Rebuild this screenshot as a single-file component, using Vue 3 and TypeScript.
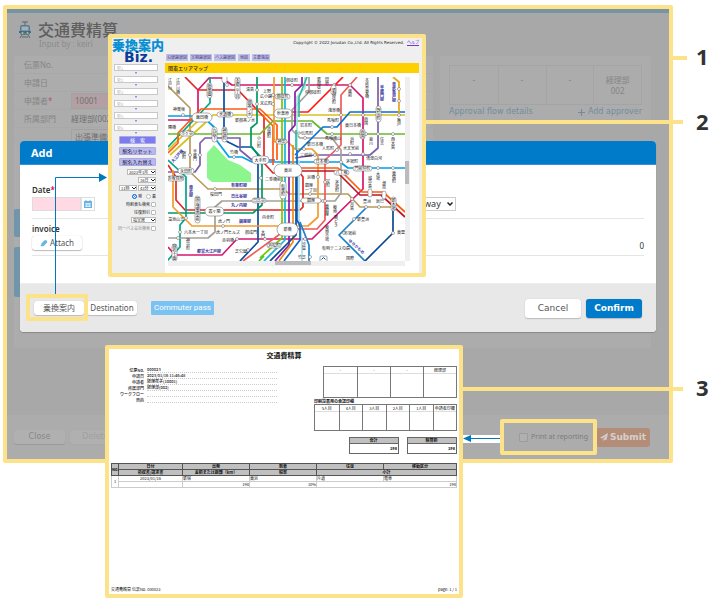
<script setup lang="ts">
import { ref } from 'vue'

interface Line { c: string; d: string; w?: number }
interface Station { x: number; y: number; w: number; h: number; t?: string; v?: boolean }
interface Label { x: number; y: number; t: string; v?: boolean; b?: boolean }

const lines: Line[] = [
  { c: '#b89a5e', d: 'M168 86 190 108V172L208 189H282L290 194H348L360 207H393' },
  { c: '#d8c020', d: 'M168 150 199 120M170 155 205 123 213 115H405' },
  { c: '#d6186e', d: 'M168 120H198V90L209 78H222L232 85H350L363 98V189L312 239H237L222 255H175L168 247' },
  { c: '#e02828', d: 'M185 77 198 90H238L264 117V163L273 173H300L303 177V207L300 210H185L176 200V177L168 165' },
  { c: '#ff1818', d: 'M343 77 308 112H290' },
  { c: '#00a58c', d: 'M210 77V103L168 147M168 160 186 177V218L180 225V247L167 261' },
  { c: '#009fe8', d: 'M168 116H202L214 127V137L229 157H242L252 162H340L348 168H405' },
  { c: '#ff5a10', d: 'M168 153 178 143V133L201 109H260L277 125V160' },
  { c: '#ff5a10', d: 'M262 115 273 126V165' },
  { c: '#6ab82e', d: 'M168 134H260L273 121H312L327 134H405' },
  { c: '#0a4fa0', d: 'M224 77V140L238 147H252L258 155V242L240 261' },
  { c: '#7a5fa8', d: 'M168 172H195L200 165V143L205 138H240V150L252 160H275M295 158 315 155H370L378 148V77' },
  { c: '#009a60', d: 'M257 77V123L251 128V147L262 158V205L253 213H168' },
  { c: '#f39c2c', d: 'M173 170V207L192 226H308L318 217V155L312 149H295L288 142H275L274 137V77' },
  { c: '#a5a098', d: 'M168 238H208L215 232V207L222 201H335L341 193V150L332 138H300L292 130V110L309 92V77' },
  { c: '#ef5b5b', d: 'M357 77 341 95V145L325 160V220L317 229H287L243 261' },
  { c: '#0b70d0', d: 'M405 112H350L337 127H323L295 155' },
  { c: '#b4def0', d: 'M299 160V220L302 240V261' },
  { c: '#a0e5dc', d: 'M305 77V88L297 97V155' },
  { c: '#33b8a5', d: 'M307 77 299 97V117M296 130V150' },
  { c: '#8a1aaa', d: 'M302 77V85L295 92V125L289 132V245L275 261' },
  { c: '#78c800', d: 'M282 77V238L260 258' },
  { c: '#18b5dc', d: 'M285 77V240L264 261' },
  { c: '#ef8a18', d: 'M293 145V242L279 261' },
  { c: '#1068be', d: 'M297 150V220L300 226V240L284 261' },
  { c: '#0a4e96', d: 'M296 170V235L270 261' },
  { c: '#1880cd', d: 'M300 222 309 245V261' },
  { c: '#ff5a10', d: 'M300 168H338L362 192H383L405 212' },
  { c: '#bc1827', d: 'M300 171H336L360 195H381L405 217' },
  { c: '#1880cd', d: 'M367 207 339 235 365 261' },
  { c: '#0b4896', d: 'M365 261 393 233V207' },
  { c: '#eba50e', d: 'M393 77 399 82V115' },
  { c: '#45c820', d: 'M259 261 264 256' }
]
const stations: Station[] = [
  { x: 192, y: 113, w: 20, h: 9, t: '飯田橋' }, { x: 274, y: 109, w: 18, h: 9, t: '秋葉原' },
  { x: 274, y: 164, w: 28, h: 13, t: '東京' }, { x: 277, y: 223, w: 21, h: 13, t: '新橋' },
  { x: 252, y: 156, w: 17, h: 8, t: '大手町' }, { x: 205, y: 207, w: 19, h: 9, t: '霞ヶ関' },
  { x: 178, y: 168, w: 16, h: 6, t: '永田町' }, { x: 167, y: 176, w: 17, h: 5, t: '赤坂見附' },
  { x: 217, y: 112, w: 16, h: 5, t: '水道橋' }, { x: 180, y: 131, w: 14, h: 5, t: '市ヶ谷' },
  { x: 275, y: 94, w: 15, h: 5, t: '御徒町' }, { x: 276, y: 139, w: 11, h: 5, t: '神田' },
  { x: 314, y: 159, w: 15, h: 5, t: '日本橋' }, { x: 353, y: 166, w: 19, h: 5, t: '門前仲町' },
  { x: 301, y: 198, w: 20, h: 5, t: '銀座' }, { x: 334, y: 170, w: 15, h: 5, t: '八丁堀' },
  { x: 267, y: 243, w: 14, h: 5, t: '浜松町' }, { x: 252, y: 198, w: 14, h: 5, t: '日比谷' },
  { x: 207, y: 83, w: 5, h: 15, t: '後楽園', v: true }, { x: 222, y: 70, w: 5, h: 13, v: true },
  { x: 235, y: 77, w: 5, h: 22, t: '本郷三丁目', v: true }, { x: 247, y: 99, w: 5, h: 19, t: '御茶ノ水', v: true },
  { x: 212, y: 127, w: 5, h: 15, t: '九段下', v: true }, { x: 222, y: 127, w: 5, h: 15, t: '神保町', v: true },
  { x: 195, y: 196, w: 5, h: 27, t: '国会議事堂前', v: true }, { x: 280, y: 181, w: 6, h: 18, t: '有楽町', v: true },
  { x: 172, y: 244, w: 5, h: 17, t: '麻布十番', v: true }, { x: 331, y: 85, w: 5, h: 10, v: true },
  { x: 376, y: 106, w: 5, h: 16, t: '錦糸町', v: true }, { x: 360, y: 129, w: 5, h: 10, t: '両国', v: true },
  { x: 368, y: 189, w: 4, h: 8, v: true }, { x: 382, y: 191, w: 4, h: 8, v: true },
  { x: 391, y: 197, w: 5, h: 14, t: '新木場', v: true }
]
const dots: [number, number][] = [
  [183, 115], [190, 155], [200, 155], [227, 85], [292, 85], [334, 85], [350, 85], [341, 115], [363, 115],
  [399, 115], [257, 90], [257, 104], [273, 95], [273, 104], [378, 134], [363, 154], [350, 154], [315, 155],
  [341, 162], [325, 182], [318, 177], [323, 201], [352, 199], [366, 207], [379, 207], [354, 219], [344, 233],
  [305, 239], [265, 239], [186, 218], [223, 226], [237, 239], [180, 232], [215, 189], [178, 238], [234, 157],
  [393, 233], [393, 168], [378, 168], [366, 134], [332, 134], [393, 134], [337, 150], [399, 101], [399, 89],
  [332, 127], [305, 138], [310, 194], [325, 201], [248, 250], [261, 178], [310, 257], [304, 149]
]
const labels: Label[] = [
  { x: 170, y: 78, t: '江戸川', v: true }, { x: 178, y: 78, t: '江戸川橋', v: true }, { x: 173, y: 111, t: '神楽坂' },
  { x: 168, y: 129, t: '曙橋' }, { x: 235, y: 122, t: '新御茶ノ水' }, { x: 246, y: 91, t: '湯島' },
  { x: 263, y: 93, t: '上野' }, { x: 260, y: 98, t: '広小路' }, { x: 260, y: 105, t: '末広町' },
  { x: 286, y: 82, t: '御徒町' }, { x: 305, y: 94, t: '仲御徒町' }, { x: 319, y: 77, t: '新御徒', v: true },
  { x: 327, y: 77, t: '田原', v: true }, { x: 334, y: 88, t: '新御徒町', v: true }, { x: 350, y: 89, t: '蔵前', v: true },
  { x: 367, y: 78, t: '本所吾妻橋', v: true }, { x: 382, y: 85, t: '半蔵門線', v: true, b: true },
  { x: 394, y: 82, t: '東武亀戸線', v: true, b: true }, { x: 328, y: 112, t: '浅草橋' }, { x: 327, y: 122, t: '馬喰町' },
  { x: 345, y: 127, t: '東日本橋' }, { x: 300, y: 127, t: '岩本町' }, { x: 297, y: 135, t: '小伝馬町' },
  { x: 325, y: 140, t: '馬喰横山' }, { x: 307, y: 146, t: '新日本橋' }, { x: 322, y: 150, t: '人形町' },
  { x: 343, y: 150, t: '水天宮前' }, { x: 366, y: 117, t: '両国', v: true }, { x: 399, y: 118, t: '亀戸', v: true },
  { x: 352, y: 137, t: '浜町', v: true }, { x: 371, y: 137, t: '菊川', v: true }, { x: 382, y: 137, t: '住吉', v: true },
  { x: 393, y: 137, t: '西大島', v: true }, { x: 269, y: 126, t: '淡路町', v: true }, { x: 259, y: 136, t: '小川町', v: true },
  { x: 230, y: 154, t: '竹橋' }, { x: 184, y: 151, t: '麹町', v: true }, { x: 195, y: 149, t: '半蔵門', v: true },
  { x: 231, y: 187, t: '有楽町線', b: true }, { x: 231, y: 198, t: '日比谷線', b: true },
  { x: 231, y: 207, t: '丸ノ内線', b: true }, { x: 239, y: 223, t: '銀座線', b: true },
  { x: 191, y: 185, t: '南北線', v: true, b: true }, { x: 210, y: 196, t: '桜田門' },
  { x: 218, y: 223, t: '虎ノ門' }, { x: 216, y: 234, t: '虎ノ門ヒルズ' }, { x: 245, y: 234, t: '御成門' },
  { x: 184, y: 234, t: '六本木一丁目' }, { x: 222, y: 242, t: '赤羽橋' }, { x: 188, y: 238, t: '神谷町', v: true },
  { x: 197, y: 253, t: '都営大江戸線', b: true }, { x: 235, y: 253, t: '芝公園' }, { x: 168, y: 221, t: '溜池山王' },
  { x: 265, y: 181, t: '二重橋前' }, { x: 262, y: 219, t: '内幸町' }, { x: 263, y: 230, t: '大門', v: true },
  { x: 307, y: 179, t: '京橋' }, { x: 305, y: 187, t: '銀座' }, { x: 305, y: 192, t: '一丁目' },
  { x: 328, y: 179, t: '宝町', v: true }, { x: 337, y: 180, t: '茅場町', v: true }, { x: 327, y: 204, t: '東銀座', v: true },
  { x: 335, y: 205, t: '築地', v: true }, { x: 336, y: 215, t: '勝どき', v: true }, { x: 327, y: 225, t: '築地市場', v: true },
  { x: 352, y: 202, t: '月島', v: true }, { x: 346, y: 163, t: '茅場町' }, { x: 366, y: 160, t: '清澄白河' },
  { x: 370, y: 176, t: '越中島', v: true }, { x: 378, y: 172, t: '木場', v: true }, { x: 384, y: 181, t: '潮見', v: true },
  { x: 394, y: 171, t: '東陽町', v: true }, { x: 363, y: 203, t: '豊洲' }, { x: 376, y: 203, t: '辰巳' },
  { x: 357, y: 221, t: '新豊洲' }, { x: 344, y: 235, t: '市場前' }, { x: 322, y: 250, t: '有明テニスの森' },
  { x: 397, y: 234, t: '東雲' }, { x: 298, y: 259, t: '竹芝' }, { x: 304, y: 242, t: '汐留', v: true },
  { x: 300, y: 157, t: '三越前' }, { x: 346, y: 260, t: '国際' }
]

const stops = ['駅1', '駅2', '駅3', '駅4', '駅5', '駅6']
const tabs = ['沿線路線図', '定期路線図', 'バス路線図', '地図', '主要施設']
const reportRows = [
  ['伝票No.', '000023'], ['申請日', '2023/01/16 11:46:48'], ['申請者', '経理花子(10001)'],
  ['所属部門', '経理部(002)'], ['ワークフロー', ''], ['目的', '']
]
const approvers = ['-', '-', '-', '経理部']
const stamps = ['5人目', '4人目', '3人目', '2人目', '1人目', '申請者印欄']
const direction = ref('dep')
const invoiceTotal = ref(0)
</script>

<template>
  <div class="page">
    <main class="app">
      <header class="app-head">
        <svg class="train" viewBox="0 0 12 18" aria-hidden="true">
          <path d="M3 1H9M6 1V4" stroke="#5d6468" fill="none" />
          <rect x="1" y="4" width="10" height="10" rx="2" fill="#547c92" />
          <rect x="2.500" y="5.500" width="7" height="4" fill="#a8b0b4" />
          <path d="M0 10H12V12H0z" fill="#3f6f88" />
          <circle cx="3.500" cy="12" r="1" fill="#c5b877" /><circle cx="8.500" cy="12" r="1" fill="#c5b877" />
          <path d="M3 14 1 17M9 14 11 17M3 16H9" stroke="#5d6468" fill="none" />
        </svg>
        <div>
          <h1>交通費精算</h1>
          <p>Input by : keiri</p>
        </div>
      </header>
      <div class="columns">
        <section class="card form">
          <div class="row"><span class="lab">伝票No.</span></div>
          <div class="row"><span class="lab">申請日</span></div>
          <div class="row"><label class="lab" for="applicant">申請者<i>*</i></label><input id="applicant" class="pink" value="10001"></div>
          <div class="row"><span class="lab">所属部門</span><span class="val">経理部(002)</span></div>
          <div class="row"><span class="lab"></span><input class="purpose" aria-label="目的" value="出張準備金"></div>
        </section>
        <section class="card approval">
          <div class="flow"><div>-</div><div>-</div><div>-</div><div>経理部<br>002</div></div>
          <div class="links">
            <a href="#flow">Approval flow details</a>
            <a href="#add"><svg viewBox="0 0 8 8" aria-hidden="true"><path d="M4 0V8M0 4H8" stroke="currentColor" stroke-width="1.300" /></svg>Add approver</a>
          </div>
        </section>
      </div>
      <div class="backdrop-body"><span class="tab-a"></span><span class="tab-b"></span></div>
      <footer class="app-foot">
        <button class="soft">Close</button>
        <button class="soft faint">Delete</button>
        <label class="print"><input type="checkbox">Print at reporting</label>
        <button class="submit">
          <svg viewBox="0 0 10 10" aria-hidden="true"><path d="M10 0 0 6 3 7 8 3 4 8V10L6 8 8 9z" fill="currentColor" /></svg>Submit
        </button>
      </footer>

      <section class="dialog">
        <h2>Add</h2>
        <div class="dlg-body">
          <div class="line-row">
            <div class="field">
              <label for="date">Date<i>*</i></label>
              <div class="date">
                <input id="date">
                <button aria-label="Open calendar">
                  <svg viewBox="0 0 8 8"><path d="M0 1H8V8H0z" fill="#69b2e4" /><path d="M2 0V2M6 0V2" stroke="#69b2e4" /><path d="M1 3.500H7M1 5H7M1 6.500H7M2.500 3V7M4 3V7M5.500 3V7" stroke="#fff" stroke-width=".5" /></svg>
                </button>
              </div>
            </div>
            <span class="sel way">
              <select aria-label="Trip type"><option>One way</option></select>
              <svg viewBox="0 0 6 4"><path d="M.500.500 3 3 5.500.500" fill="none" stroke="#222" stroke-width="1.500" /></svg>
            </span>
          </div>
          <div class="line-row invoice">
            <div class="field">
              <span class="cap">invoice</span>
              <button class="btn attach"><svg viewBox="0 0 8 8" aria-hidden="true"><path d="M2 5 5 2M1.500 6.500 6 2M3 6.500 6.500 3" stroke="#66b5e8" stroke-width="1.700" stroke-linecap="round" /></svg>Attach</button>
            </div>
            <output>{{ invoiceTotal }}</output>
          </div>
        </div>
        <div class="dlg-foot">
          <button class="btn">乗換案内</button>
          <button class="btn">Destination</button>
          <button class="commuter">Commuter pass</button>
          <button class="btn big cancel">Cancel</button>
          <button class="btn big confirm">Confirm</button>
        </div>
      </section>
    </main>

    <svg class="arrow-map" viewBox="0 0 54 121" aria-hidden="true"><path d="M1.500 121V4.500H46" fill="none" stroke="#0078be" /><path d="M45 0 53 4.500 45 9z" fill="#0078be" /></svg>
    <span class="mark mark-transfer"></span>
    <span class="mark mark-print"></span>
    <svg class="arrow-report" viewBox="0 0 37 8" aria-hidden="true"><path d="M0 0H37V8H0z" fill="#fff" /><path d="M7 3.500H37" stroke="#0078be" /><path d="M0 3.500 8 0V7z" fill="#0078be" /></svg>
    <span class="lead lead-1"></span><b class="num num-1">1</b>
    <span class="lead lead-2"></span><b class="num num-2">2</b>
    <span class="lead lead-3"></span><b class="num num-3">3</b>

    <section class="map-window">
      <aside>
        <div class="brand">乗換案内</div>
        <div class="biz">Biz.</div>
        <div class="stops">
          <template v-for="s in stops" :key="s"><input :placeholder="s" :aria-label="s"><span class="down"></span></template>
        </div>
        <button class="side main">検　索</button>
        <button class="side">駅名リセット</button>
        <button class="side">駅名入れ替え</button>
        <div class="opts">
          <div><span class="sel"><select aria-label="年月"><option>2023年1月</option></select><svg viewBox="0 0 6 4"><path d="M1 1 3 3 5 1" fill="none" stroke="#222" /></svg></span></div>
          <div><span class="sel"><select aria-label="日"><option>16日</option></select><svg viewBox="0 0 6 4"><path d="M1 1 3 3 5 1" fill="none" stroke="#222" /></svg></span></div>
          <div>
            <span class="sel"><select aria-label="時"><option>11時</option></select><svg viewBox="0 0 6 4"><path d="M1 1 3 3 5 1" fill="none" stroke="#222" /></svg></span>
            <span class="sel"><select aria-label="分"><option>43分</option></select><svg viewBox="0 0 6 4"><path d="M1 1 3 3 5 1" fill="none" stroke="#222" /></svg></span>
          </div>
          <div class="dirs"><label><input v-model="direction" type="radio" value="dep">発</label><label><input v-model="direction" type="radio" value="arr">着</label></div>
          <div><label>時刻表も検索<input type="checkbox"></label></div>
          <div><label>往復割引<input type="checkbox"></label></div>
          <div><span class="sel"><select aria-label="座席"><option>指定席　</option></select><svg viewBox="0 0 6 4"><path d="M1 1 3 3 5 1" fill="none" stroke="#222" /></svg></span></div>
          <div class="dim"><label>同一バス会社検索<input type="checkbox"></label></div>
        </div>
      </aside>
      <div class="map-main">
        <div class="copy"><span>Copyright © 2022 Jorudan Co.,Ltd. All Rights Reserved.</span><a href="#help">ヘルプ</a></div>
        <nav><a v-for="t in tabs" :key="t" href="#map">{{ t }}</a></nav>
        <h3>関東エリアマップ</h3>
        <div class="map-pane">
          <svg class="map" viewBox="168 77 237 184" role="img" aria-label="路線図">
            <path d="M214 145 207 153V178L212 182H251V173L240 165 228 160z" fill="#8df58d" />
            <path v-for="(l, i) in lines" :key="i" :d="l.d" :stroke="l.c" stroke-width="1.700" fill="none" stroke-linejoin="round" />
            <circle v-for="(d, i) in dots" :key="'d' + i" :cx="d[0]" :cy="d[1]" r="1.500" fill="#fff" stroke="#777" stroke-width=".6" />
            <g v-for="(s, i) in stations" :key="'s' + i">
              <rect :x="s.x" :y="s.y" :width="s.w" :height="s.h" :rx="Math.min(s.w, s.h) / 2" fill="#fff" stroke="#777" stroke-width=".6" />
              <text v-if="s.t && s.v" class="st vert" :x="s.x + s.w / 2" :y="s.y + s.h / 2" text-anchor="middle">{{ s.t }}</text>
              <text v-else-if="s.t" class="st" :x="s.x + s.w / 2" :y="s.y + s.h / 2 + 1.5" text-anchor="middle">{{ s.t }}</text>
            </g>
            <text v-for="(l, i) in labels" :key="'l' + i" class="lb" :class="{ vert: l.v, blue: l.b }" :x="l.x" :y="l.y">{{ l.t }}</text>
            <text class="lb blue" x="173" y="163" transform="rotate(-48 173 163)">大江戸線</text>
            <text class="lb blue" x="348" y="241" transform="rotate(42 348 241)">ゆりかもめ</text>
            <rect x="320" y="256" width="7" height="6" rx="1" fill="#fff" stroke="#68a" stroke-width=".7" />
            <path d="M321.500 259.500 323.500 257.500 325.500 259.500" fill="none" stroke="#345" />
          </svg>
          <div class="vbar"><span></span></div>
          <div class="hbar"><span></span></div>
        </div>
      </div>
    </section>

    <section class="report">
      <h3>交通費精算</h3>
      <div class="rep-top">
        <dl><template v-for="r in reportRows" :key="r[0]"><dt>{{ r[0] }}</dt><dd>{{ r[1] }}</dd></template></dl>
        <div class="rep-right">
          <div class="boxes four"><span v-for="(a, i) in approvers" :key="i">{{ a }}</span></div>
          <h4>印刷設置用の承認印欄</h4>
          <div class="boxes six"><span v-for="s in stamps" :key="s">{{ s }}</span></div>
          <div class="totals"><div><b>合計</b><b>198</b></div><div><b>精算額</b><b>198</b></div></div>
        </div>
      </div>
      <table>
        <colgroup><col class="c-no"><col class="c-a"><col class="c-b"><col class="c-b"><col class="c-b"><col></colgroup>
        <thead>
          <tr><th rowspan="2">No.</th><th>日付</th><th>出発</th><th>到着</th><th>往復</th><th>移動区分</th></tr>
          <tr><th>領収書/請求書</th><th>金額または距離（km）</th><th>税率</th><th colspan="2">小計</th></tr>
        </thead>
        <tbody>
          <tr><td rowspan="2" class="mid">1</td><td class="mid">2023/01/16</td><td>新宿</td><td>東京</td><td>片道</td><td>電車</td></tr>
          <tr><td></td><td class="end">198</td><td class="end">10%</td><td colspan="2" class="end">198</td></tr>
        </tbody>
      </table>
      <footer><span>交通費精算 伝票No. 000023</span><span>page: 1 / 1</span></footer>
    </section>
  </div>
</template>

<style>
body { margin: 0; background: #fff; }
</style>

<style scoped>
* { box-sizing: border-box; }
h1, h2, h3, h4, p, dl, dd { margin: 0; }
.page { position: relative; padding: 5px 42px 140px 3px; font: 8px/12px "Noto Sans", "Noto Sans CJK JP", sans-serif; color: #333; }
button, input, select { font: inherit; color: inherit; margin: 0; padding: 0; border: 0; border-radius: 0; background: none; appearance: none; outline: 0; min-width: 0; }
i { font-style: normal; color: #e60033; }
a { text-decoration: none; color: inherit; }

.app { position: relative; display: flex; flex-direction: column; min-height: 458px; border: 4px solid #fce38a; border-radius: 2px; background: #a8a8a8; }
.app::before { content: ""; height: 4px; background: #7894a3; }
.app-head { display: flex; gap: 7px; padding: 6px 12px 0; height: 43px; color: #5f5f5f; }
.train { width: 12px; height: 18px; margin-top: 2px; }
h1 { font: 500 16px/20px "Noto Sans CJK JP", sans-serif; }
.app-head p { padding-left: 1px; line-height: 10px; color: #8c8c8c; }
.columns { display: flex; gap: 7px; padding: 0 18px 0 7px; color: #858585; }
.card { background: #acacac; border-radius: 2px; }
.form { flex: 1; height: 85px; overflow: hidden; }
.row { display: flex; align-items: center; height: 18px; padding-left: 10px; border-bottom: 1px solid #a8a8a8; }
.lab { width: 47px; }
.lab i { color: #b05a68; }
.row input { width: 120px; height: 16px; padding-left: 3px; border: 1px solid #a2a2a2; color: #707070; }
.row .pink { background: #b3a0a5; }
.row .val { color: #707070; }
.approval { flex: 0 0 211px; padding: 9px 9px 0; height: 66px; }
.flow { display: grid; grid-template-columns: repeat(4, 1fr); height: 40px; border: 1px solid #a4a4a4; text-align: center; line-height: 11px; }
.flow div { padding-top: 8px; border-left: 1px solid #a4a4a4; }
.flow div:first-child { border-left: 0; }
.links { display: flex; justify-content: space-between; font: 8px/14px "DejaVu Sans", sans-serif; color: #708d9d; }
.links a { display: flex; align-items: center; gap: 3px; }
.links svg { width: 7px; height: 7px; }
.backdrop-body { flex: 1; position: relative; margin: 0 18px 0 7px; background: #acacac; max-height: 207px; }
.tab-a, .tab-b { position: absolute; left: 0; width: 20px; height: 28px; top: 68px; border-radius: 2px; background: #7196ab; }
.tab-b { top: 106px; height: 50px; }
.app-foot { display: flex; align-items: center; gap: 5px; margin-top: auto; padding: 0 19px 0 7px; height: 45px; background: #acacac; border-top: 1px solid #a9a9a9; }
.soft { width: 51px; height: 14px; border-radius: 3px; background: #b0b0b0; box-shadow: 0 1px 1px #999; font: 8px/12px "DejaVu Sans", sans-serif; color: #888; }
.faint { color: #a0a0a0; box-shadow: 0 0 1px #999; }
.print { display: flex; align-items: center; gap: 3px; margin-left: auto; color: #7c7c7c; font-size: 7px; }
.print input { width: 9px; height: 9px; border: 1px solid #9c9c9c; border-radius: 1px; background: #b0b0b0; }
.submit { width: 54px; height: 19px; margin-left: 3px; border-radius: 3px; background: #b48d78; color: #d6d0cc; font: bold 9px/19px "DejaVu Sans", sans-serif; display: flex; align-items: center; justify-content: center; gap: 2px; }
.submit svg { width: 8px; height: 8px; }

.dialog { position: absolute; left: 13px; right: 13px; top: 132px; border-radius: 4px; overflow: hidden; background: #fff; box-shadow: 0 1px 1px #888; }
h2 { height: 24px; padding-left: 11px; background: #007bc9; border-bottom: 1px solid #3492d0; color: #fff; font: bold 11px/24px "Noto Sans", sans-serif; }
.dlg-body { height: 119px; padding: 19px 12px 0; border-bottom: 1px solid #eee; }
.line-row { display: flex; align-items: flex-end; justify-content: space-between; height: 35px; padding-bottom: 7px; border-bottom: 1px solid #e5e5e5; }
.invoice { height: 37px; padding-bottom: 2px; align-items: center; }
.invoice output { font-size: 8px; padding-top: 19px; }
.field { display: flex; flex-direction: column; font-weight: 600; }
.field .btn { font-weight: 400; }
.date { display: flex; margin-top: 1px; }
.date input { width: 49px; height: 14px; background: #ffd9e3; border: 1px solid #ddd; }
.date button { display: grid; place-items: center; width: 14px; height: 14px; border: 1px solid #ddd; }
.date svg { width: 8px; height: 8px; }
.sel { display: inline-grid; align-items: center; }
.sel select, .sel svg { grid-area: 1 / 1; }
.sel svg { justify-self: end; pointer-events: none; }
.way { margin-right: 188px; }
.way select { width: 60px; height: 14px; padding-left: 7px; border: 1px solid #ccc; font-size: 9px; }
.way svg { width: 6px; height: 4px; margin-right: 3px; }
.btn { width: 50px; height: 14px; border-radius: 3px; background: #fff; box-shadow: 0 1px 1px #bbb, 0 0 1px #bbb; color: #555; white-space: nowrap; }
.attach { display: flex; align-items: center; justify-content: center; gap: 2px; margin-top: 1px; }
.attach svg { width: 8px; height: 8px; }
.dlg-foot { display: flex; align-items: center; height: 48px; gap: 3px; padding: 0 14px; background: #e8e8e8; }
.commuter { width: 63px; height: 14px; margin-left: 11px; background: #79c2f2; color: #fff; font-family: Roboto, sans-serif; white-space: nowrap; border-radius: 1px; }
.big { width: 56px; height: 19px; font: 9px/19px "DejaVu Sans", sans-serif; }
.cancel { margin-left: auto; }
.confirm { margin-left: 2px; background: #007bc9; color: #fff; font-weight: bold; }

.mark { position: absolute; border: 4px solid #fce38a; border-radius: 2px; }
.mark-transfer { left: 26px; top: 294px; width: 62px; height: 27px; }
.mark-print { right: 118px; top: 419px; width: 97px; height: 36px; }
.arrow-map { position: absolute; left: 54px; top: 173px; width: 54px; height: 121px; }
.arrow-report { position: absolute; left: 463px; top: 435px; width: 37px; height: 8px; }
.lead { position: absolute; height: 4px; background: #fce38a; }
.lead-1 { left: 672px; width: 15px; top: 56px; }
.lead-2 { left: 426px; width: 257px; top: 120px; }
.lead-3 { left: 463px; width: 220px; top: 387px; }
.num { position: absolute; left: 696px; font: bold 22px/28px "Noto Sans", sans-serif; }
.num-1 { top: 42px; }
.num-2 { top: 107px; }
.num-3 { top: 373px; }

.map-window { position: absolute; left: 108px; top: 34px; width: 318px; height: 243px; display: flex; border: 4px solid #fce38a; border-radius: 2px; background: #efefef; overflow: hidden; font: 4px/6px "Noto Sans CJK JP", sans-serif; color: #222; }
aside { width: 53px; display: flex; flex-direction: column; }
.brand { height: 13px; font: 900 13px/13px "Noto Sans CJK JP", sans-serif; color: #0a8fd2; white-space: nowrap; }
.biz { height: 13px; text-align: center; font: bold 14px/12px "DejaVu Sans", sans-serif; color: #0c3c96; }
.stops { display: flex; flex-direction: column; padding: 0 7px 0 2px; }
.stops input { height: 7px; width: 100%; padding-left: 2px; border: 1px solid #c8c8c8; background: #fff; line-height: 5px; }
.stops input::placeholder { color: #bbb; }
.down { align-self: center; margin: 1px 0 2px; border: 1px solid transparent; border-top: 2px solid #6a6ae8; border-bottom: 0; height: 2px; }
.side { width: 37px; height: 8px; margin: 0 0 3px 7px; border-radius: 1px; background: #b9b9f0; border: 1px solid #a9a9e4; font-size: 5px; line-height: 6px; color: #223; white-space: nowrap; }
.side.main { background: #7c7cf0; color: #fff; }
.opts { display: flex; flex-direction: column; gap: 2px; width: 44px; }
.opts div { display: flex; justify-content: flex-end; gap: 1px; height: 6px; }
.opts .dirs { gap: 4px; }
.opts select { height: 6px; padding: 0 6px 0 1px; border: 1px solid #bbb; background: #fff; font-size: 4px; line-height: 4px; }
.sel svg { width: 6px; height: 4px; }
.opts label { display: flex; align-items: center; gap: 1px; font-size: 4px; white-space: nowrap; }
.opts .dim { color: #888; }
.opts input { width: 5px; height: 5px; border: 1px solid #bbb; border-radius: 1px; background: #fff; }
.opts input[type=radio] { border-radius: 50%; }
.opts input[type=radio]:checked { border-color: #1070e0; background: #1070e0; box-shadow: inset 0 0 0 1px #fff; }
.map-main { flex: 1; display: flex; flex-direction: column; min-width: 0; }
.copy { display: flex; justify-content: flex-end; gap: 3px; height: 16px; padding: 1px 3px 0 0; font: 4px/8px "DejaVu Sans", "Noto Sans CJK JP", sans-serif; white-space: nowrap; }
.copy a { color: #73c; text-decoration: underline; }
nav { display: flex; gap: 2px; height: 9px; padding-left: 1px; }
nav a { height: 7px; padding: 0 1px; min-width: 12px; text-align: center; background: #c0c0f0; color: #446; white-space: nowrap; line-height: 7px; }
.map-main h3 { height: 10px; margin-right: 3px; padding-left: 3px; background: #ffd000; font: 500 5px/10px "Noto Sans CJK JP", sans-serif; }
.map-pane { flex: 1; display: grid; grid-template: 1fr 5px / 1fr 5px; margin-right: 3px; padding: 4px 9px 7px 3px; background: #fff; }
.map { width: 100%; height: 100%; display: block; background: #fff; }
.vbar, .hbar { background: #efefef; display: flex; }
.vbar span { width: 4px; height: 23px; margin-top: 84px; background: #bbb; }
.hbar span { width: 36px; height: 4px; margin-left: 107px; background: #bbb; }
.st { font: 400 4px "Noto Sans CJK JP", sans-serif; fill: #222; }
.lb { font: 400 4px "Noto Sans CJK JP", sans-serif; fill: #222; }
.blue { fill: #33339a; font-weight: 700; }
.vert { writing-mode: vertical-rl; }

.report { position: absolute; left: 105px; top: 345px; width: 358px; height: 253px; display: flex; flex-direction: column; padding: 0 2px 2px; border: 4px solid #fce38a; border-radius: 2px; background: #fff; color: #111; font: 4px/6px "Liberation Sans Narrow", "Noto Sans CJK JP", sans-serif; }
.report h3 { font: bold 7px/12px "Noto Sans CJK JP", sans-serif; text-align: center; }
.rep-top { display: flex; justify-content: space-between; height: 102px; }
dl { display: grid; grid-template-columns: 33px 130px; grid-auto-rows: 6px; column-gap: 3px; padding-top: 6px; height: max-content; font-weight: 500; }
dt { text-align: right; white-space: nowrap; }
dd { border-bottom: 1px dotted #ccc; line-height: 5px; }
.rep-right { width: 143px; padding-top: 5px; }
.boxes { display: grid; border: 1px solid #777; text-align: center; line-height: 6px; }
.boxes span { border-left: 1px solid #777; white-space: nowrap; }
.boxes span:first-child { border-left: 0; }
.boxes span::after { content: ""; display: block; border-top: 1px solid #ddd; }
.four { grid-template-columns: repeat(4, 1fr); margin-left: 9px; height: 32px; }
.six { grid-template-columns: repeat(6, 1fr); height: 27px; }
h4 { font: bold 4px/6px "Noto Sans CJK JP", sans-serif; }
.totals { display: flex; justify-content: flex-end; gap: 8px; margin-top: 6px; }
.totals div { width: 50px; border: 1px solid #666; }
.totals b { display: block; height: 9px; padding-right: 1px; text-align: right; line-height: 9px; font-size: 4px; }
.totals b:first-child { height: 6px; background: #c0c0c0; border-bottom: 1px solid #666; text-align: center; line-height: 5px; }
table { width: 100%; table-layout: fixed; border-collapse: collapse; border: 1px solid #555; }
.c-no { width: 7px; }
.c-a { width: 64px; }
.c-b { width: 67px; }
th, td { height: 6px; padding: 0; line-height: 5px; border: 1px solid #ccc; text-align: left; white-space: nowrap; }
th { background: #c0c0c0; border-color: #555; text-align: center; }
td.mid { text-align: center; }
td.end { text-align: right; }
.report footer { display: flex; justify-content: space-between; margin-top: auto; }
</style>
